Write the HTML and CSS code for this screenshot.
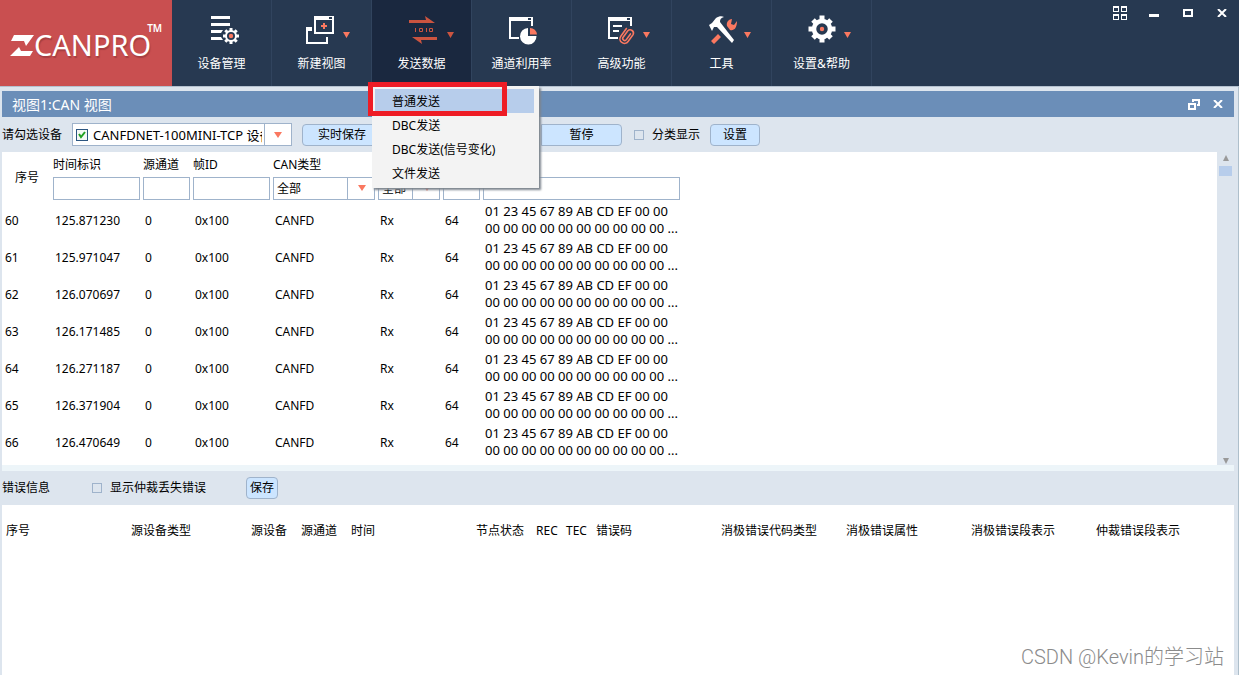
FILE: index.html
```html
<!DOCTYPE html>
<html lang="zh-CN">
<head>
<meta charset="utf-8">
<title>ZCANPRO</title>
<link rel="stylesheet" href="styles.css">
</head>
<body>
<header class="topbar">
  <h1 class="logo">
    <svg class="logo-mark" viewBox="0 0 24 22" role="img" aria-label="Z"><path d="M4 0H24L16 11 14 6H1zM0 21L9 12 11 16H23L20 21z" fill="#fff"/></svg>
    <span class="logo-name">CANPRO</span><span class="logo-tm">TM</span>
  </h1>
  <nav class="nav">
    <button class="nav-item" type="button">
      <svg class="nav-icon" viewBox="0 0 60 32">
        <path d="M9 2h19v3H9zM9 9h19v3H9zM9 16h12l-2 3H9zM9 23h10l2 3H9z" fill="#fff"/>
        <g stroke="#fff" fill="none"><circle cx="29" cy="22" r="5" stroke-width="2"/>
        <path stroke-width="3" d="M29 14v3M29 27v3M21 22h3M34 22h3M23.300 16.300l2 2M32.700 25.700l2 2M34.700 16.300l-2 2M25.300 25.700l-2 2"/></g>
        <circle cx="29" cy="22" r="2.200" fill="#fa7860"/>
      </svg>
      <span>设备管理</span>
    </button>
    <button class="nav-item" type="button">
      <svg class="nav-icon" viewBox="0 0 60 32">
        <path fill="#fff" fill-rule="evenodd" d="M12 2h20v18H12zM14 6v12h16V6zM27 3v2h3V3z"/>
        <path fill="#fff" d="M4 13h6v4H6v11h18v-5h2v7H4z"/>
        <path fill="#fa7860" d="M21 9h2v2h2v2h-2v2h-2v-2h-2v-2h2zM41 18h7l-3.500 6z"/>
      </svg>
      <span>新建视图</span>
    </button>
    <div class="nav-group">
      <button class="nav-item nav-item-active" type="button" aria-expanded="true">
        <svg class="nav-icon" viewBox="0 0 60 32">
          <path fill="#cb5440" d="M7 6h17l-1-4 10 7H7zM35 23H10l10 7-1-4h16zM13 14h1v4h-1zM24 14h1v4h-1zM45 18h7l-3.500 6z"/>
          <path fill="none" stroke="#cb5440" d="M17.500 14.500h3v3h-3zM27.500 14.500h3v3h-3z"/>
        </svg>
        <span>发送数据</span>
      </button>
      <ul class="menu">
        <li><button class="menu-item menu-item-current" type="button">普通发送</button></li>
        <li><button class="menu-item" type="button">DBC发送</button></li>
        <li><button class="menu-item" type="button">DBC发送(信号变化)</button></li>
        <li><button class="menu-item" type="button">文件发送</button></li>
      </ul>
      <div class="menu-marker"></div>
    </div>
    <button class="nav-item" type="button">
      <svg class="nav-icon" viewBox="0 0 60 32">
        <path fill="#fff" fill-rule="evenodd" d="M7 3h24v9h-2V7H9v16h8v2H7zM26 4v2h3V4z"/>
        <path fill="#fff" d="M26 14v8h8.500A8.250 8.250 0 1 1 26 14z"/>
        <path fill="#fa7860" d="M28 14a7 7 0 0 1 7 6.500h-7z"/>
      </svg>
      <span>通道利用率</span>
    </button>
    <button class="nav-item" type="button">
      <svg class="nav-icon" viewBox="0 0 60 32">
        <path fill="#fff" fill-rule="evenodd" d="M6 3h24v9h-2V7H8v16h8v2H6zM25 4v2h3V4zM11 11h9v2h-9zM11 16h6v2h-6z"/>
        <path fill="none" stroke="#fa7860" stroke-width="1.600" stroke-linecap="round" transform="rotate(36 24.500 22)" d="M20 16v9.500a4.500 4.500 0 0 0 9 0V17a3.300 3.300 0 0 0-6.500 0v8a2 2 0 0 0 4 0v-7"/>
        <path fill="#fa7860" d="M41 18h7l-3.500 6z"/>
      </svg>
      <span>高级功能</span>
    </button>
    <button class="nav-item" type="button">
      <svg class="nav-icon" viewBox="0 0 60 32">
        <path fill="#fa7860" d="M30 5c-3 0-6 3-5 7l3 4c4 1 7-2 7-9l-3 4-3-1zM9 27l7-7 3 3-7 7zM42 18h7l-3.500 6z"/>
        <path fill="#fff" d="M7 11l3-2 4-5c3-2 6-2 8-1-3 1-4 2-4 5l14 18-2 3-15-16-3 0-2 4z"/>
      </svg>
      <span>工具</span>
    </button>
    <button class="nav-item" type="button">
      <svg class="nav-icon" viewBox="0 0 60 32">
        <g stroke="#fff" fill="none"><circle cx="20" cy="15" r="8" stroke-width="4.500"/>
        <path stroke-width="5" d="M20 1.500v5M20 23.500v5M6.500 15h5M28.500 15h5M11 6l3 3M26 21l3 3M29 6l-3 3M14 21l-3 3"/></g>
        <circle cx="20" cy="15" r="2.200" fill="#fa7860"/>
        <path fill="#fa7860" d="M42 18h7l-3.500 6z"/>
      </svg>
      <span>设置&amp;帮助</span>
    </button>
  </nav>
  <div class="window-controls">
    <button class="icon-button" type="button" aria-label="布局"><svg width="14" height="14" viewBox="0 0 14 14" fill="#fff" fill-rule="evenodd"><path d="M0 0h6v6H0zM1 2v3h4V2zM8 0h6v6H8zM9 2v3h4V2zM0 8h6v6H0zM1 10v3h4v-3zM8 8h6v6H8zM9 10v3h4v-3z"/></svg></button>
    <button class="icon-button" type="button" aria-label="最小化"><svg width="10" height="8" viewBox="0 0 10 8"><path d="M0 5h10v3H0z" fill="#fff"/></svg></button>
    <button class="icon-button" type="button" aria-label="最大化"><svg width="10" height="8" viewBox="0 0 10 8"><path d="M1 1h8v6H1z" fill="none" stroke="#fff" stroke-width="2"/></svg></button>
    <button class="icon-button" type="button" aria-label="关闭"><svg width="10" height="8" viewBox="0 0 10 8"><path d="M1 0l8 8M9 0L1 8" stroke="#fff" stroke-width="2"/></svg></button>
  </div>
</header>

<main class="workspace">
  <div class="view-title">
    <h2 class="view-name">视图1:CAN 视图</h2>
    <button class="icon-button icon-button-small" type="button" aria-label="还原"><svg width="12" height="11" viewBox="0 0 12 11" fill="none" stroke="#fff" stroke-width="2"><path d="M1 5h6v5H1zM5 3V1h6v5H9"/></svg></button>
    <button class="icon-button icon-button-small" type="button" aria-label="关闭视图"><svg width="10" height="8" viewBox="0 0 10 8"><path d="M1 0l8 8M9 0L1 8" stroke="#fff" stroke-width="2"/></svg></button>
  </div>

  <div class="toolbar">
    <span class="toolbar-label">请勾选设备</span>
    <div class="device-box">
      <input class="device-check" type="checkbox" id="device" checked>
      <label class="device-name" for="device">CANFDNET-100MINI-TCP 设备</label>
      <button class="device-open" type="button" aria-label="选择设备"></button>
    </div>
    <button class="button button-first" type="button">实时保存</button>
    <button class="button button-last" type="button">暂停</button>
    <label class="check"><input class="check-box" type="checkbox">分类显示</label>
    <button class="button button-set" type="button">设置</button>
  </div>

  <section class="frames">
    <div class="frames-view">
      <table class="frame-table">
        <colgroup><col class="c49"><col class="c90"><col class="c50"><col class="c80"><col class="c105"><col class="c65"><col class="c40"><col class="c200"></colgroup>
        <thead>
          <tr>
            <th class="index-head">序号</th>
            <th><label for="f1">时间标识</label><input class="field" id="f1" type="text"></th>
            <th><label for="f2">源通道</label><input class="field" id="f2" type="text"></th>
            <th><label for="f3">帧ID</label><input class="field" id="f3" type="text"></th>
            <th><label for="f4">CAN类型</label><span class="pick"><select class="field" id="f4"><option>全部</option></select></span></th>
            <th class="field-only"><span class="pick"><select class="field" aria-label="方向"><option>全部</option></select></span></th>
            <th class="field-only"><input class="field" type="text" aria-label="长度"></th>
            <th class="field-only"><input class="field" type="text" aria-label="数据"></th>
          </tr>
        </thead>
        <tbody>
          <tr><td>60</td><td>125.871230</td><td>0</td><td>0x100</td><td>CANFD</td><td>Rx</td><td>64</td><td class="bytes">01 23 45 67 89 AB CD EF 00 00<br>00 00 00 00 00 00 00 00 00 00 ...</td></tr>
          <tr><td>61</td><td>125.971047</td><td>0</td><td>0x100</td><td>CANFD</td><td>Rx</td><td>64</td><td class="bytes">01 23 45 67 89 AB CD EF 00 00<br>00 00 00 00 00 00 00 00 00 00 ...</td></tr>
          <tr><td>62</td><td>126.070697</td><td>0</td><td>0x100</td><td>CANFD</td><td>Rx</td><td>64</td><td class="bytes">01 23 45 67 89 AB CD EF 00 00<br>00 00 00 00 00 00 00 00 00 00 ...</td></tr>
          <tr><td>63</td><td>126.171485</td><td>0</td><td>0x100</td><td>CANFD</td><td>Rx</td><td>64</td><td class="bytes">01 23 45 67 89 AB CD EF 00 00<br>00 00 00 00 00 00 00 00 00 00 ...</td></tr>
          <tr><td>64</td><td>126.271187</td><td>0</td><td>0x100</td><td>CANFD</td><td>Rx</td><td>64</td><td class="bytes">01 23 45 67 89 AB CD EF 00 00<br>00 00 00 00 00 00 00 00 00 00 ...</td></tr>
          <tr><td>65</td><td>126.371904</td><td>0</td><td>0x100</td><td>CANFD</td><td>Rx</td><td>64</td><td class="bytes">01 23 45 67 89 AB CD EF 00 00<br>00 00 00 00 00 00 00 00 00 00 ...</td></tr>
          <tr><td>66</td><td>126.470649</td><td>0</td><td>0x100</td><td>CANFD</td><td>Rx</td><td>64</td><td class="bytes">01 23 45 67 89 AB CD EF 00 00<br>00 00 00 00 00 00 00 00 00 00 ...</td></tr>
        </tbody>
      </table>
    </div>
    <div class="scrollbar">
      <svg width="8" height="6" viewBox="0 0 8 6"><path d="M4 0l3 6H1z" fill="#999"/></svg>
      <div class="scroll-thumb"></div>
      <svg width="8" height="6" viewBox="0 0 8 6"><path d="M1 0h6L4 6z" fill="#999"/></svg>
    </div>
  </section>
  <div class="splitter"></div>

  <div class="error-bar">
    <span class="error-title">错误信息</span>
    <label class="check"><input class="check-box" type="checkbox">显示仲裁丢失错误</label>
    <button class="button button-save" type="button">保存</button>
  </div>
  <section class="errors">
    <table class="error-table">
      <colgroup><col class="c125"><col class="c120"><col class="c50"><col class="c50"><col class="c125"><col class="c60"><col class="c30"><col class="c30"><col class="c125"><col class="c125"><col class="c125"><col class="c125"><col></colgroup>
      <thead><tr><th>序号</th><th>源设备类型</th><th>源设备</th><th>源通道</th><th>时间</th><th>节点状态</th><th>REC</th><th>TEC</th><th>错误码</th><th>消极错误代码类型</th><th>消极错误属性</th><th>消极错误段表示</th><th>仲裁错误段表示</th></tr></thead>
    </table>
    <p class="watermark">CSDN @Kevin的学习站</p>
  </section>
</main>
</body>
</html>
```

FILE: styles.css
```css
* {
  box-sizing: border-box;
}

body {
  margin: 0;
  min-height: 100vh;
  display: flex;
  flex-direction: column;
  background: #dde5ee;
  color: #000;
  font: 12px/16px "Noto Sans", "Noto Sans CJK SC", sans-serif;
}

button,
input,
select {
  margin: 0;
  padding: 0;
  font: inherit;
  color: inherit;
}

h1,
h2,
p,
ul {
  margin: 0;
  padding: 0;
  font-weight: normal;
  list-style: none;
}

/* Top bar */
.topbar {
  display: flex;
  height: 87px;
  background: #273951;
  border-bottom: 1px solid #b4c1cf;
}

.logo {
  display: flex;
  width: 172px;
  padding: 24px 0 0 10px;
  background: #c94f50;
  color: #fff;
}

.logo-mark {
  flex: none;
  width: 24px;
  height: 22px;
  margin-top: 11px;
}

.logo-name {
  font-size: 29px;
  line-height: 42px;
  text-shadow: 1px 2px 1px #a63f42;
}

.logo-tm {
  margin-left: -4px;
  font-size: 10px;
  font-weight: 600;
  line-height: 8px;
}

.nav {
  display: flex;
}

.nav-group {
  position: relative;
  display: flex;
}

.nav-item {
  display: flex;
  flex-direction: column;
  align-items: center;
  gap: 10px;
  width: 100px;
  padding: 14px 0 0;
  border: 0;
  border-right: 1px solid #31445e;
  background: transparent;
  color: #fff;
}

.nav-item-active {
  background: #1a283f;
}

.nav-icon {
  width: 60px;
  height: 32px;
  margin-left: 20px;
}

.window-controls {
  display: flex;
  align-items: flex-start;
  margin-left: auto;
}

.icon-button {
  display: flex;
  align-items: center;
  justify-content: center;
  width: 34px;
  height: 26px;
  border: 0;
  background: transparent;
}

.icon-button-small {
  width: 24px;
}

/* Drop-down menu */
.menu {
  position: absolute;
  z-index: 2;
  top: 86px;
  left: 0;
  width: 167px;
  padding: 3px 5px 3px 3px;
  background: #f3f3f3;
  box-shadow: 2px 2px 2px #7d858e;
}

.menu-item {
  display: block;
  width: 100%;
  height: 24px;
  padding: 2px 0 0 17px;
  border: 0;
  background: transparent;
  text-align: left;
}

.menu-item-current {
  background: #b7cdeb;
}

.menu-marker {
  position: absolute;
  z-index: 3;
  top: 82px;
  left: -4px;
  width: 139px;
  height: 34px;
  border: 5px solid #ee1c25;
  pointer-events: none;
}

/* Workspace */
.workspace {
  flex: 1;
  display: flex;
  flex-direction: column;
  padding: 4px 4px 0 2px;
  border-right: 1px solid #aebfcb;
}

.view-title {
  display: flex;
  align-items: center;
  height: 26px;
  padding: 0 4px 0 10px;
  background: #6b8eb8;
  color: #fff;
}

.view-name {
  margin-right: auto;
  padding-top: 2px;
  font-size: 14px;
  line-height: 20px;
}

.toolbar {
  display: flex;
  align-items: center;
  height: 35px;
  white-space: nowrap;
}

.toolbar-label {
  width: 70px;
}

.device-box {
  display: flex;
  align-items: center;
  width: 220px;
  height: 23px;
  border: 1px solid #9fb3cb;
  background: #fff;
}

.device-check,
.check-box {
  appearance: none;
  flex: none;
  border: 1px solid #9fb3cb;
  border-radius: 0;
}

.device-check {
  width: 12px;
  height: 12px;
  margin: 0 5px 0 3px;
  border-color: #2b5580;
  background: #f4f8f4 url("data:image/svg+xml,%3Csvg xmlns='http://www.w3.org/2000/svg' viewBox='0 0 10 10'%3E%3Cpath d='M2 4l2 3 4-5' fill='none' stroke='%2321a121' stroke-width='2'/%3E%3C/svg%3E");
}

.device-name {
  flex: 1;
  overflow: hidden;
  font-size: 13px;
}

.device-open {
  align-self: stretch;
  display: flex;
  flex: none;
  align-items: center;
  justify-content: center;
  width: 27px;
  margin-left: 2px;
  border: 0;
  border-left: 1px solid #9fb3cb;
  background: #fff;
}

.device-open::before,
.pick::after {
  content: "";
  border: 4px solid transparent;
  border-top: 6px solid #fa7860;
  border-bottom: 0;
}

.button {
  height: 22px;
  border: 1px solid #9fb3cb;
  border-radius: 4px;
  background: #cce5ff;
}

.button-first {
  width: 80px;
  margin-left: 10px;
}

.button-last {
  width: 81px;
  margin: 0 12px 0 159px;
  border-radius: 0 4px 4px 0;
}

.button-set {
  width: 50px;
  margin-left: 10px;
}

.button-save {
  width: 32px;
  margin-left: 40px;
}

.check {
  display: flex;
  align-items: center;
  gap: 8px;
}

.check-box {
  width: 10px;
  height: 10px;
}

/* Frame list */
.frames {
  display: flex;
  height: 313px;
}

.frames-view {
  flex: 1;
  overflow: hidden;
  background: #fff;
}

.frame-table,
.error-table {
  table-layout: fixed;
  border-collapse: collapse;
}

.frame-table {
  width: 679px;
}

.frame-table th,
.error-table th {
  font-weight: normal;
  text-align: left;
  white-space: nowrap;
}

.frame-table th {
  height: 50px;
  padding: 0 1px 2px 2px;
}

.frame-table .index-head {
  padding: 2px 0 0 13px;
}

.frame-table .field-only {
  vertical-align: bottom;
}

.frame-table th label {
  display: block;
  line-height: 24px;
}

.frame-table td {
  height: 37px;
  padding: 0 0 0 4px;
}

.frame-table td:first-child {
  padding-left: 3px;
}

.frame-table .bytes {
  padding-bottom: 2px;
  font-size: 13px;
  line-height: 17px;
  white-space: nowrap;
}

.field {
  display: block;
  width: 100%;
  height: 23px;
  padding: 1px 3px 0;
  border: 1px solid #9fb3cb;
  border-radius: 0;
  background: #fff;
  appearance: none;
}

.pick {
  position: relative;
  display: block;
}

.pick::before {
  content: "";
  position: absolute;
  top: 0;
  right: 27px;
  height: 23px;
  border-left: 1px solid #9fb3cb;
}

.pick::after {
  position: absolute;
  top: 8px;
  right: 9px;
}

.scrollbar {
  display: flex;
  flex-direction: column;
  align-items: center;
  width: 17px;
  padding: 3px 2px 1px;
}

.scroll-thumb {
  width: 13px;
  height: 10px;
  margin: 5px 0 auto;
  background: #b7cdeb;
}

.splitter {
  height: 6px;
  background: #edf5f9;
}

/* Error list */
.error-bar {
  display: flex;
  align-items: center;
  height: 34px;
}

.error-title {
  width: 90px;
}

.errors {
  position: relative;
  flex: 1;
  background: #fff;
}

.error-table {
  width: 100%;
}

.error-table th {
  height: 52px;
  padding: 0 0 0 4px;
}

.c30 { width: 30px; }
.c40 { width: 40px; }
.c49 { width: 49px; }
.c50 { width: 50px; }
.c60 { width: 60px; }
.c65 { width: 65px; }
.c80 { width: 80px; }
.c90 { width: 90px; }
.c105 { width: 105px; }
.c120 { width: 120px; }
.c125 { width: 125px; }
.c200 { width: 200px; }

.watermark {
  position: absolute;
  right: 10px;
  bottom: 4px;
  color: #8b8b8b;
  font: 20px/28px Roboto, "Noto Sans CJK SC", sans-serif;
  font-weight: 300;
}
```
